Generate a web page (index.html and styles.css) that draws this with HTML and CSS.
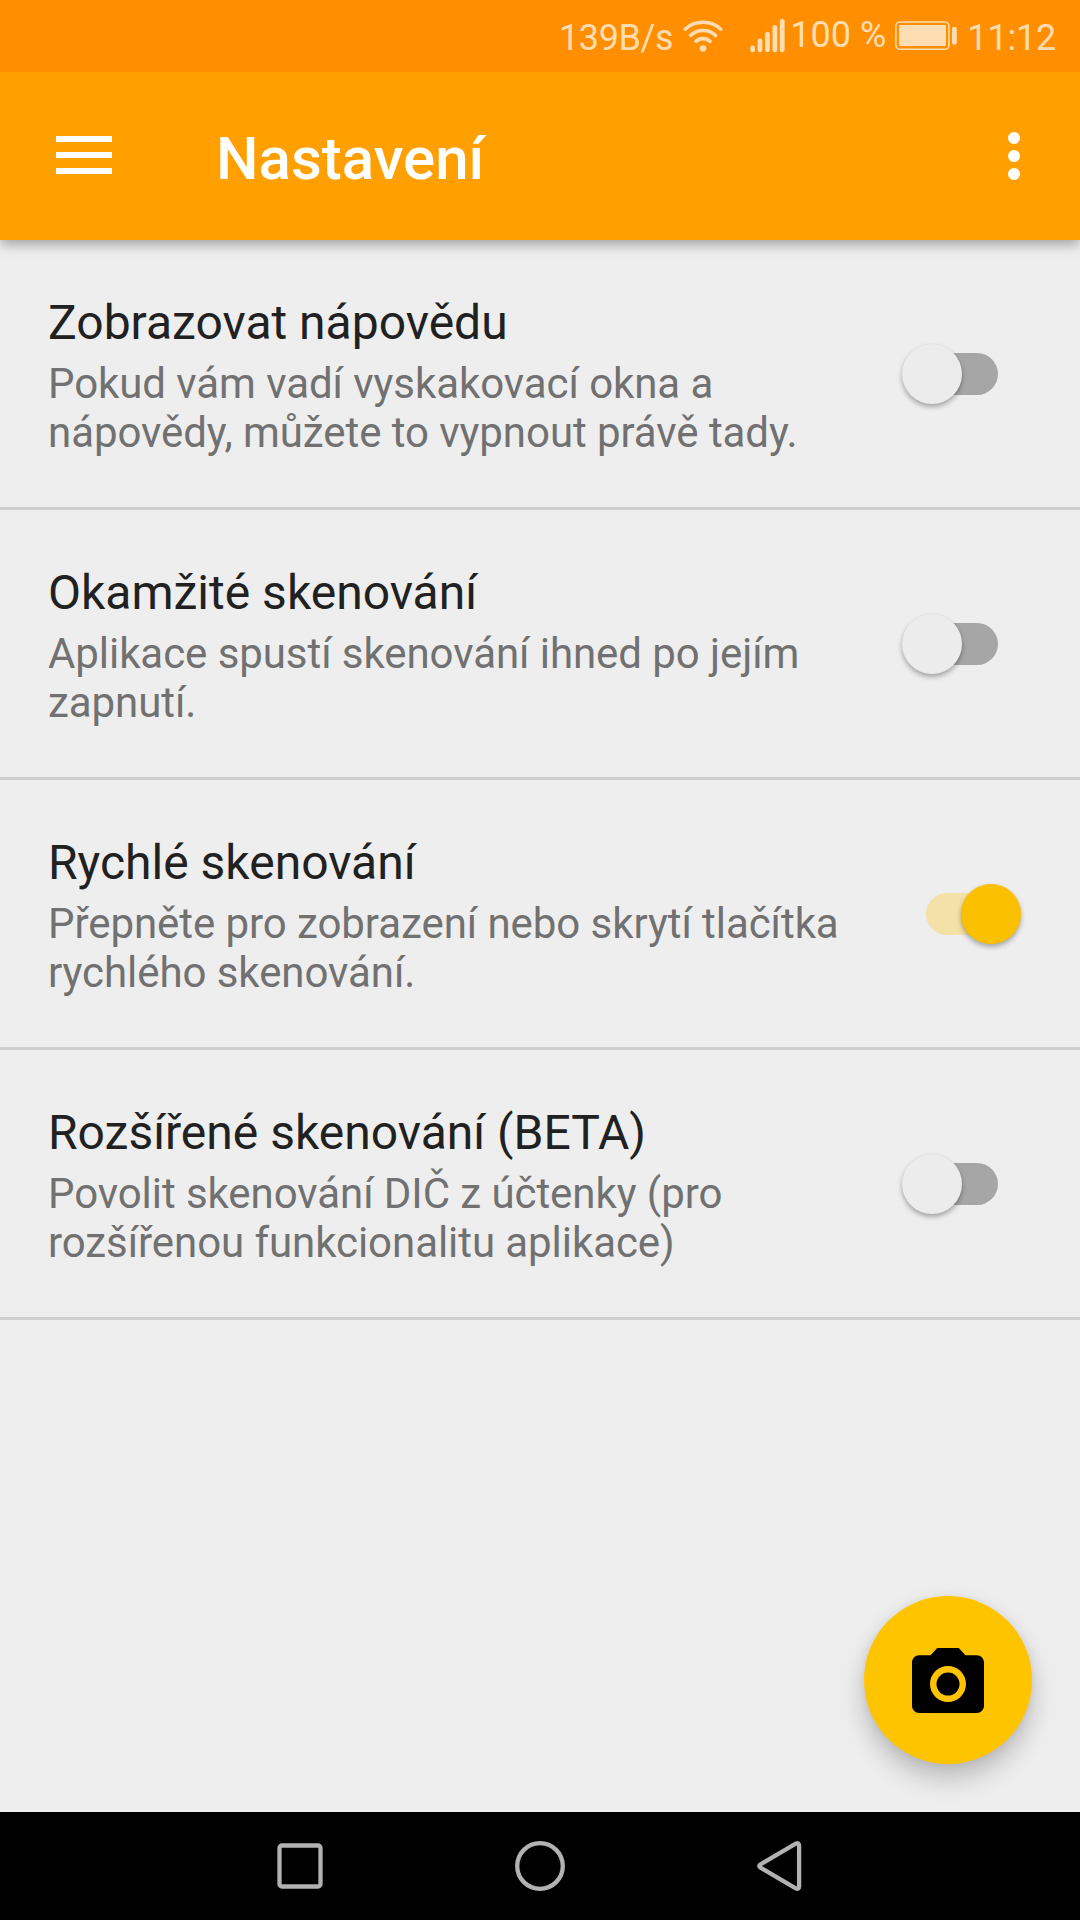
FILE: index.html
```html
<!DOCTYPE html>
<html lang="cs">
<head>
<meta charset="utf-8">
<title>Nastavení</title>
<link rel="stylesheet" href="styles.css">
</head>
<body>
<div class="screen">
  <div class="status">
    <span class="status-text speed">139B/s</span>
    <svg class="wifi" width="40" height="34" viewBox="0 0 40 34" fill="none" stroke="currentColor" stroke-width="3.6" stroke-linecap="round">
      <path d="M2.3 10.2C12 1 28 1 37.7 10.2M7.6 16.4C14.5 9.8 25.500 9.800 32.400 16.400M13 22.400C17 18.700 23 18.700 27 22.400"/>
      <circle cx="20" cy="29.500" r="3.300" fill="currentColor" stroke="none"/>
    </svg>
    <svg class="signal" width="35" height="34" viewBox="0 0 35 34" fill="currentColor">
      <rect x="0.200" y="26.500" width="4.800" height="6.700" rx="2.300"/>
      <rect x="7.600" y="19.500" width="4.800" height="13.700" rx="2.300"/>
      <rect x="15" y="12.800" width="4.800" height="20.400" rx="2.300"/>
      <rect x="22.500" y="6" width="4.800" height="27.200" rx="2.300"/>
      <rect x="29.800" y="0" width="4.800" height="33.200" rx="2.300"/>
    </svg>
    <span class="status-text percent">100 %</span>
    <svg class="battery" width="62" height="30" viewBox="0 0 62 30" fill="currentColor">
      <rect x="0.900" y="0.900" width="53" height="27.400" rx="4" fill="none" stroke="currentColor" stroke-width="1.500"/>
      <rect x="4" y="4" width="47" height="21" rx="1"/>
      <rect x="57" y="5.700" width="4.800" height="18" rx="2.200"/>
    </svg>
    <span class="status-text clock">11:12</span>
  </div>

  <header class="toolbar">
    <svg class="menu" width="56" height="38" viewBox="0 0 56 38" fill="#fff"><path d="M0 0h56v6H0zM0 16h56v6H0zM0 32h56v6H0z"/></svg>
    <h1 class="title">Nastavení</h1>
    <svg class="more" width="12" height="48" viewBox="0 0 12 48" fill="#fff"><circle cx="6" cy="6" r="6"/><circle cx="6" cy="24" r="6"/><circle cx="6" cy="42" r="6"/></svg>
  </header>

  <main class="list">
    <div class="row">
      <div class="text">
        <div class="name">Zobrazovat nápovědu</div>
        <div class="desc">Pokud vám vadí vyskakovací okna a<br>nápovědy, můžete to vypnout právě tady.</div>
      </div>
      <div class="switch"><div class="thumb"></div></div>
    </div>
    <div class="row">
      <div class="text">
        <div class="name">Okamžité skenování</div>
        <div class="desc">Aplikace spustí skenování ihned po jejím<br>zapnutí.</div>
      </div>
      <div class="switch"><div class="thumb"></div></div>
    </div>
    <div class="row">
      <div class="text">
        <div class="name">Rychlé skenování</div>
        <div class="desc">Přepněte pro zobrazení nebo skrytí tlačítka<br>rychlého skenování.</div>
      </div>
      <div class="switch on"><div class="thumb"></div></div>
    </div>
    <div class="row">
      <div class="text">
        <div class="name">Rozšířené skenování (BETA)</div>
        <div class="desc">Povolit skenování DIČ z účtenky (pro<br>rozšířenou funkcionalitu aplikace)</div>
      </div>
      <div class="switch"><div class="thumb"></div></div>
    </div>
    <div class="fab">
      <svg width="72" height="65" viewBox="2 2 20 18"><circle cx="12" cy="12" r="3.200"/><path d="M9 2L7.170 4H4c-1.100 0-2 .9-2 2v12c0 1.100.9 2 2 2h16c1.100 0 2-.9 2-2V6c0-1.100-.9-2-2-2h-3.170L15 2H9zm3 15c-2.760 0-5-2.240-5-5s2.240-5 5-5 5 2.240 5 5-2.240 5-5 5z"/></svg>
    </div>
  </main>

  <nav class="nav">
    <svg width="50" height="50" viewBox="0 0 50 50"><rect x="4.500" y="4.500" width="41" height="41" rx="2.500"/></svg>
    <svg width="50" height="50" viewBox="0 0 50 50"><circle cx="25" cy="25" r="22.800"/></svg>
    <svg width="50" height="50" viewBox="0 0 50 50"><path d="M5.300 23.500L41.100 2.500Q43.900 1.500 44.100 4.500V45.500Q43.900 48.500 41.100 47.500L5.300 26.500Q3.300 25 5.300 23.500Z"/></svg>
  </nav>
</div>
</body>
</html>
```
FILE: styles.css
```css
* { box-sizing: border-box; }
body { margin: 0; font-family: Roboto, sans-serif; }
.screen {
  width: 1080px;
  height: 1920px;
  display: flex;
  flex-direction: column;
  background: #eee;
  overflow: hidden;
}

.status {
  height: 72px;
  flex: none;
  display: flex;
  align-items: flex-start;
  justify-content: flex-end;
  padding-right: 24px;
  background: #ff8f00;
  color: #ffddb2;
  position: relative;
  z-index: 2;
}
.status svg { flex: none; margin-top: 19px; }
.status .battery { margin: 21px 10px 0 9px; }
.status-text { font-size: 36px; line-height: 42px; white-space: pre; }
.speed, .clock { padding-top: 17px; }
.speed { letter-spacing: -.35px; }
.clock { letter-spacing: -.2px; }
.percent { padding-top: 14px; }
.wifi { margin-left: 10px; }
.signal { margin-left: 27px; margin-right: 5px; }

.toolbar {
  height: 168px;
  flex: none;
  display: flex;
  align-items: flex-start;
  padding: 0 60px 0 56px;
  background: #ffa000;
  box-shadow: 0 4px 12px rgba(0, 0, 0, .34);
  z-index: 1;
}
.menu { margin-top: 64px; }
.title {
  flex: 1;
  margin: 52px 0 0 104px;
  font-size: 60px;
  line-height: 70px;
  font-weight: 500;
  color: #fff;
}
.more { margin-top: 60px; }

.list { flex: 1; position: relative; }
.row {
  height: 270px;
  display: flex;
  justify-content: space-between;
  padding: 55px 82px 0 48px;
  border-bottom: 3px solid #cfcfcf;
}
.name { font-size: 48px; line-height: 56px; color: #212121; white-space: nowrap; }
.desc {
  margin-top: 8px;
  font-size: 42px;
  line-height: 49px;
  letter-spacing: -.065px;
  color: #717171;
  white-space: nowrap;
}
.switch {
  width: 72px;
  height: 42px;
  flex: none;
  margin-top: 58px;
  display: flex;
  align-items: center;
  border-radius: 21px;
  background: #a6a6a6;
}
.thumb {
  width: 60px;
  height: 60px;
  flex: none;
  margin: -1px 0 0 -24px;
  border-radius: 50%;
  background: #ececec;
  box-shadow: 0 3px 5px rgba(0, 0, 0, .3), 0 0 1px rgba(0, 0, 0, .08);
}
.switch.on { background: #f3e1a7; }
.on .thumb { margin-left: 35px; background: #fbc000; }

.fab {
  position: absolute;
  right: 48px;
  bottom: 48px;
  width: 168px;
  height: 168px;
  display: flex;
  align-items: center;
  justify-content: center;
  border-radius: 50%;
  background: #ffc400;
  box-shadow: 0 14px 26px rgba(0, 0, 0, .22), 0 1px 10px rgba(0, 0, 0, .06);
}

.nav {
  position: relative;
  height: 108px;
  flex: none;
  display: flex;
  align-items: center;
  justify-content: center;
  gap: 190px;
  background: #000;
}
.nav svg { fill: none; stroke: #b2b2b2; stroke-width: 4.300; }
```
